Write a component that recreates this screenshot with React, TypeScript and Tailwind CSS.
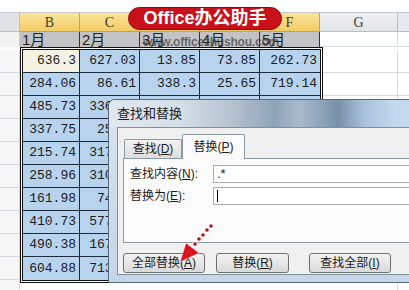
import React from "react";

const cjk = "font-['Liberation_Sans','Noto_Sans_CJK_SC',sans-serif]";

const rows: string[][] = [
  ["636.3", "627.03", "13.85", "73.85", "262.73"],
  ["284.06", "86.61", "338.3", "25.65", "719.14"],
  ["485.73", "336.48", "512.6", "128.4", "93.27"],
  ["337.75", "25.17", "407.11", "66.3", "318.5"],
  ["215.74", "317.42", "98.06", "250.7", "41.88"],
  ["258.96", "310.05", "77.3", "182.64", "503.2"],
  ["161.98", "74.35", "621.9", "39.15", "277.06"],
  ["410.73", "577.21", "140.8", "351.02", "68.4"],
  ["490.38", "167.59", "233.47", "95.6", "430.15"],
  ["604.88", "713.26", "58.91", "214.3", "187.72"],
];

const U: React.FC<{ k: string }> = ({ k }) => (
  <span>
    (<span className="underline">{k}</span>)
  </span>
);

const Sheet: React.FC = () => (
  <div className="flex flex-col">
    <div className="h-[13px] border-b border-[#c4c8cd] bg-white" />
    {/* column letters */}
    <div className="flex h-[19px] font-['Liberation_Serif',serif] text-[14px] text-[#3c3c3c]">
      <div className="w-[20px] border-r border-b border-[#b9bec5] bg-[#dfe3e8]" />
      {["B", "C", "D", "E", "F"].map((c) => (
        <div
          key={c}
          className="w-[60px] flex items-center justify-center border-r border-b border-[#c9a24a] bg-gradient-to-b from-[#fae39a] to-[#f3cc62]"
        >
          {c}
        </div>
      ))}
      <div className="w-[78px] flex items-center justify-center border-r border-b border-[#b9bec5] bg-gradient-to-b from-[#eef0f3] to-[#e1e4e8]">
        G
      </div>
      <div className="flex-1 border-b border-[#b9bec5] bg-[#e6e9ed]" />
    </div>
    {/* month row */}
    <div className="flex h-[15px]">
      <div className="w-[20px] border-r border-[#c9ccd1] bg-[#f2f2f2]" />
      {["1", "2", "3", "4", "5"].map((m) => (
        <div
          key={m}
          className={`w-[60px] flex items-center pl-[2px] border-r border-[#2a3442] bg-[#c3c3c5] text-[15px] leading-[15px] text-[#222] ${cjk}`}
        >
          {m}月
        </div>
      ))}
      <div className="w-[78px] border-r border-b border-[#d6dbe3] bg-white" />
      <div className="flex-1 border-b border-[#d6dbe3] bg-white" />
    </div>
    {/* data */}
    <div className="flex">
      <div className="w-[20px] flex flex-col pt-[3px]">
        {rows.map((_, i) => (
          <div key={i} className="h-[23px] border-b border-r border-[#d4d7db] bg-[#f7f7f7]" />
        ))}
        <div className="h-[10px] border-r border-[#d4d7db] bg-[#f7f7f7]" />
      </div>
      <div className="border-[3px] border-double border-[#111] self-start">
        {rows.map((r, i) => (
          <div key={i} className="flex h-[23px] font-['Liberation_Mono',monospace] text-[13px] text-[#1c1c1c]">
            {r.map((v, j) => (
              <div
                key={j}
                className={`flex items-center justify-end pr-[3px] border-[#1d2a3a] ${
                  i < rows.length - 1 ? "border-b" : ""
                } ${j === 0 ? "w-[57px] border-r" : j === 4 ? "w-[60px]" : "w-[60px] border-r"} ${
                  i === 0 && j === 0 ? "bg-[#f4f2e2]" : "bg-[#b8d3ed]"
                }`}
              >
                {v}
              </div>
            ))}
          </div>
        ))}
      </div>
      <div className="w-[75px] flex flex-col pt-[3px]">
        {rows.map((_, i) => (
          <div key={i} className="h-[23px] border-b border-r border-[#d6dbe3] bg-white" />
        ))}
        <div className="h-[10px] border-r border-[#d6dbe3] bg-white" />
      </div>
      <div className="flex-1 flex flex-col pt-[3px]">
        {rows.map((_, i) => (
          <div key={i} className="h-[23px] border-b border-[#d6dbe3] bg-white" />
        ))}
      </div>
    </div>
  </div>
);

const Dialog: React.FC = () => (
  <div
    className={`absolute left-[108px] top-[99px] w-[320px] h-[184px] rounded-tl-[7px] border border-[#56687b] bg-gradient-to-b from-[#d9e3ec] to-[#c6d6e6] flex flex-col ${cjk} text-[12px] text-[#1b1b1b]`}
  >
    <div className="h-[27px] flex items-center pl-[8px] text-[13px] text-[#1e1e1e] rounded-tl-[6px] bg-[linear-gradient(90deg,#e0e7ee_0%,#d6dfe8_22%,#b2c0ce_40%,#8fa3b8_52%,#a9bbcc_60%,#7890a8_72%,#a8c2dc_80%,#c3d9ef_90%,#cadcee_100%)]">
      查找和替换
    </div>
    <div className="flex-1 ml-[8px] mb-[7px] border border-[#7e8fa1] bg-[#f0f0f0] pl-[5px] pt-[5px] flex flex-col">
      <div className="flex items-end h-[25px] pl-[1px]">
        <div className="w-[58px] h-[19px] flex items-center justify-center border border-b-0 border-[#8d99a6] rounded-t-[2px] bg-gradient-to-b from-[#f2f2f2] to-[#dedede]">
          查找<U k="D" />
        </div>
        <div className="relative z-10 w-[63px] h-[25px] -mb-px flex items-center justify-center border border-b-0 border-[#8d99a6] rounded-t-[2px] bg-[#fbfbfb]">
          替换<U k="P" />
        </div>
      </div>
      <div className="h-[85px] border border-r-0 border-[#8d99a6] bg-[#fbfbfb] pl-[6px] pt-[6px] flex flex-col gap-[4px]">
        <div className="flex items-center h-[18px]">
          <div className="w-[83px]">
            查找内容<U k="N" />:
          </div>
          <div className="flex-1 h-[18px] border border-r-0 border-[#abadb3] bg-white pl-[3px] flex items-center font-['Liberation_Sans',sans-serif] text-[13px]">
            .*
          </div>
        </div>
        <div className="flex items-center h-[18px]">
          <div className="w-[83px]">
            替换为<U k="E" />:
          </div>
          <div className="flex-1 h-[18px] border border-r-0 border-[#abadb3] bg-white pl-[3px] flex items-center">
            <div className="w-px h-[12px] bg-black" />
          </div>
        </div>
      </div>
      <div className="flex mt-[10px] gap-[11px]">
        <div className="w-[82px] h-[20px] flex items-center justify-center rounded-[3px] border border-[#707070] bg-gradient-to-b from-[#f3f3f3] to-[#dadada]">
          全部替换<U k="A" />
        </div>
        <div className="w-[73px] h-[20px] flex items-center justify-center rounded-[3px] border border-[#707070] bg-gradient-to-b from-[#f3f3f3] to-[#dadada]">
          替换<U k="R" />
        </div>
        <div className="ml-[9px] w-[82px] h-[20px] flex items-center justify-center rounded-[3px] border border-[#707070] bg-gradient-to-b from-[#f3f3f3] to-[#dadada]">
          查找全部<U k="I" />
        </div>
      </div>
    </div>
  </div>
);

const Arrow: React.FC = () => (
  <svg className="absolute left-0 top-0 pointer-events-none" width="409" height="290" viewBox="0 0 409 290">
    {[
      [195, 244],
      [199, 239],
      [203, 235],
      [207, 230],
      [211, 226],
    ].map(([x, y], i) => (
      <g key={i}>
        <circle cx={x} cy={y} r="2.6" fill="#ffffff" opacity="0.8" />
        <circle cx={x} cy={y} r="1.8" fill="#b3121c" />
      </g>
    ))}
    <polygon points="180,262 186,243 199,253" fill="#d8141f" stroke="#ffffff" strokeWidth="0.8" strokeOpacity="0.6" />
  </svg>
);

export default function App() {
  return (
    <div className="relative w-[409px] h-[290px] overflow-hidden bg-white">
      <Sheet />
      <div className="absolute left-[128px] top-[7px] w-[154px] h-[23px] rounded-full bg-[#c9111b] border border-[#8e0a12] flex items-center justify-center text-white font-bold text-[18px] font-['Liberation_Sans','Noto_Sans_CJK_SC',sans-serif]">
        Office办公助手
      </div>
      <div className="absolute left-[143px] top-[33px] text-[12px] tracking-[-0.2px] font-bold text-[#3a3a3a]/70 font-['Liberation_Sans',sans-serif]">
        www.officezhushou.com
      </div>
      <Dialog />
      <Arrow />
    </div>
  );
}
